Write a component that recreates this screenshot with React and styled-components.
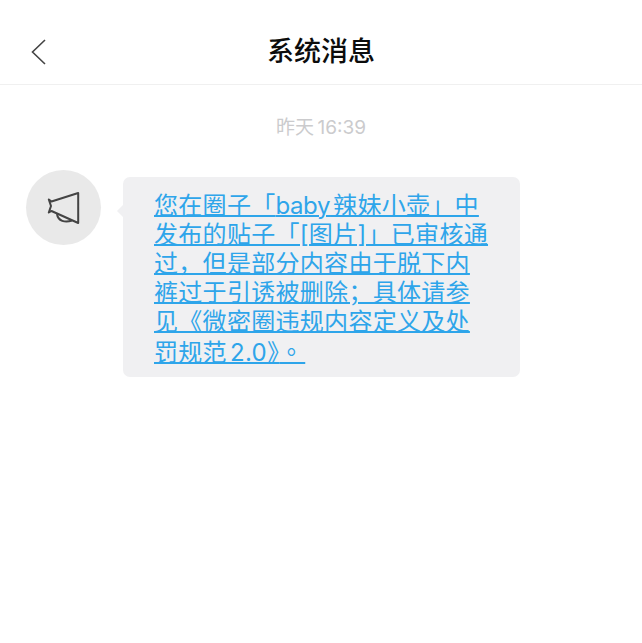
import React from "react";
import styled, { createGlobalStyle } from "styled-components";

const GlobalStyle = createGlobalStyle`
  html, body {
    margin: 0;
    padding: 0;
    background: #fff;
  }
  body {
    font-family: "Inter", "Noto Sans CJK SC", sans-serif;
  }
`;

const Page = styled.div`
  width: 642px;
  height: 643px;
  overflow: hidden;
  background: #fff;
`;

const Header = styled.header`
  position: relative;
  height: 69px;
  padding-top: 15px;
  display: flex;
  align-items: center;
  justify-content: center;
  border-bottom: 1px solid #f0f0f0;
`;

const BackButton = styled.button`
  position: absolute;
  left: 28px;
  top: 36px;
  width: 22px;
  height: 32px;
  padding: 0;
  border: none;
  background: none;
`;

const Title = styled.h1`
  margin: 0;
  font-family: "Noto Sans CJK SC", sans-serif;
  font-size: 27px;
  line-height: 34px;
  font-weight: 500;
  color: #0c0c0c;
`;

const Time = styled.div`
  margin-top: 30px;
  text-align: center;
  font-size: 19px;
  line-height: 26px;
  word-spacing: -2px;
  color: #cbcbcd;
`;

const Message = styled.div`
  display: flex;
  align-items: flex-start;
  gap: 22px;
  margin-top: 29px;
  padding-left: 26px;
`;

const Avatar = styled.div`
  flex: none;
  width: 75px;
  height: 75px;
  border-radius: 50%;
  background: #e9e9e9;
  display: flex;
  align-items: center;
  justify-content: center;
`;

const Bubble = styled.div`
  position: relative;
  margin-top: 7px;
  width: 397px;
  height: 200px;
  box-sizing: border-box;
  padding: 14px 0 0 31px;
  background: #f0f0f2;
  border-radius: 7px;

  &::before {
    content: "";
    position: absolute;
    left: -6px;
    top: 28px;
    border-style: solid;
    border-width: 6px 6px 6px 0;
    border-color: transparent #f0f0f2 transparent transparent;
  }
`;

const LinkText = styled.a`
  display: block;
  font-family: "Inter", "Noto Sans CJK SC", sans-serif;
  font-size: 24px;
  line-height: 29px;
  letter-spacing: 0.3px;
  word-spacing: -4px;
  white-space: nowrap;
  color: #2ea5ea;
  text-decoration: underline;
  text-decoration-thickness: 2px;
  text-underline-offset: 1px;
`;

const Latin = styled.span`
  letter-spacing: -0.4px;
`;

const Period = styled.span`
  font-family: "Noto Sans CJK TC", sans-serif;
  letter-spacing: 2px;
`;

const BackIcon = () => (
  <svg width="22" height="32" viewBox="0 0 22 32" fill="none">
    <path d="M17 4 L4.5 16 L17 28" stroke="#444" strokeWidth="1.6" />
  </svg>
);

const HornIcon = () => (
  <svg width="36" height="34" viewBox="0 0 36 34" fill="none">
    <path
      d="M2.8 8.5 L5.5 10.5 L32.2 2 V32 L5.5 20 L2.8 21.5 L5 15 Z"
      stroke="#444"
      strokeWidth="2"
      strokeLinejoin="round"
    />
    <path d="M11 23 C12 30 19 32 26 29.5" stroke="#444" strokeWidth="2" />
  </svg>
);

const App = () => (
  <Page lang="zh-CN">
    <GlobalStyle />
    <Header>
      <BackButton aria-label="返回">
        <BackIcon />
      </BackButton>
      <Title>系统消息</Title>
    </Header>
    <Time>昨天 16:39</Time>
    <Message>
      <Avatar>
        <HornIcon />
      </Avatar>
      <Bubble>
        <LinkText>
          您在圈子「<Latin>baby</Latin> 辣妹小壶」中
          <br />
          发布的贴子「[图片]」已审核通
          <br />
          过，但是部分内容由于脱下内
          <br />
          裤过于引诱被删除；具体请参
          <br />
          见《微密圈违规内容定义及处
          <br />
          罚规范 2.0》<Period lang="zh-TW">。</Period>
        </LinkText>
      </Bubble>
    </Message>
  </Page>
);

export default App;
